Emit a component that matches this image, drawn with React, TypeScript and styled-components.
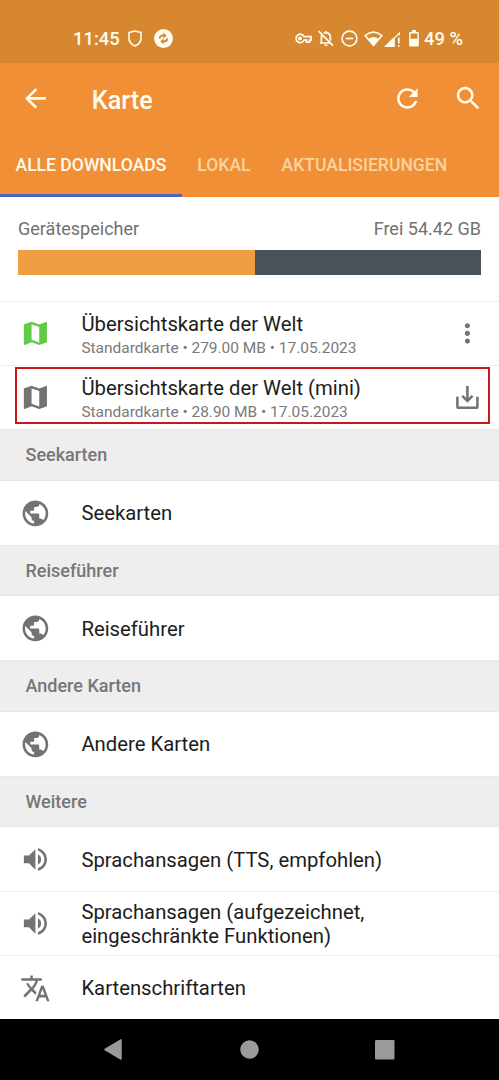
import React from "react";
import styled, { createGlobalStyle } from "styled-components";

const GlobalStyle = createGlobalStyle`
  * { box-sizing: border-box; }
  body { margin: 0; background: #fff; font-family: Roboto, sans-serif; }
`;

const Screen = styled.div`
  width: 499px;
  height: 1080px;
  display: flex;
  flex-direction: column;
  overflow: hidden;
  background: #fff;
`;

const StatusBar = styled.header`
  height: 63px;
  flex: none;
  display: flex;
  align-items: center;
  padding: 14px 36px 0 73px;
  background: #d7872f;
  color: #fffdf2;
  font-size: 18.4px;
  font-weight: 500;
`;

const Clock = styled.span`
  width: 46px;
  white-space: nowrap;
`;

const BatteryLevel = styled.span`
  margin-left: 4.5px;
  white-space: nowrap;
`;

const Glyph = styled.svg<{ $gap?: number }>`
  display: block;
  flex: none;
  margin-left: ${(p) => p.$gap ?? 0}px;
  overflow: visible;
`;

const Spacer = styled.div`
  flex: 1;
`;

const AppBar = styled.div`
  height: 134.3px;
  flex: none;
  background: #f08f35;
  color: #fffdf2;
`;

const Toolbar = styled.div`
  height: 71px;
  display: flex;
  align-items: center;
  padding: 0 15px 0 20px;
`;

const Title = styled.h1`
  margin: 4px 0 0 41px;
  font-size: 25.2px;
  line-height: 30px;
  font-weight: 500;
`;

const Tabs = styled.nav`
  height: 63.3px;
  display: flex;
`;

const Tab = styled.div<{ $active?: boolean }>`
  padding: 19.4px 15.5px 0;
  font-size: 17.56px;
  line-height: 24px;
  font-weight: 500;
  white-space: nowrap;
  color: ${(p) => (p.$active ? "#fffaeb" : "#fbd3a0")};
  border-bottom: 3px solid ${(p) => (p.$active ? "#4a67c6" : "transparent")};
`;

const Storage = styled.section`
  height: 103.7px;
  flex: none;
  padding: 20px 18px 0;
  font-size: 18.03px;
  line-height: 24px;
  color: #717171;
`;

const StorageLabels = styled.div`
  display: flex;
  justify-content: space-between;
`;

const Meter = styled.div`
  display: flex;
  height: 25.5px;
  margin-top: 8.7px;
  background: #495159;
`;

const MeterUsed = styled.div`
  width: 51.1%;
  background: #ee9d43;
`;

const Row = styled.div<{ $first?: boolean }>`
  position: relative;
  height: 64.15px;
  flex: none;
  display: flex;
  align-items: center;
  padding: 0 16.6px 0 20.1px;
  border-top: 1px solid ${(p) => (p.$first ? "transparent" : "#eeeeee")};
  color: #737373;
`;

const RowText = styled.div`
  flex: 1;
  margin-left: 30.5px;
`;

const RowTitle = styled.div`
  font-size: 20.3px;
  line-height: 24px;
  color: #1c1c1c;
  white-space: pre-line;
`;

const RowMeta = styled.div`
  font-size: 15.46px;
  line-height: 20px;
  margin: 2px 0 -3px;
  color: #7a7a7a;
`;

const Highlight = styled.div`
  position: absolute;
  left: 14.5px;
  right: 9px;
  top: 0.6px;
  height: 57px;
  border: 2px solid #cc1518;
`;

const SectionHeader = styled.h2`
  height: 51.35px;
  flex: none;
  margin: 0;
  padding: 0 25.5px;
  background: #eeeeee;
  border-top: 1px solid #e8e8e8;
  border-bottom: 1px solid #e6e6e6;
  font-size: 18px;
  line-height: 50.4px;
  font-weight: 500;
  color: #777777;
`;

const NavBar = styled.footer`
  flex: 1;
  margin-top: -0.5px;
  background: #000;
  display: flex;
  align-items: center;
  padding: 1px 104px 0;
  justify-content: space-between;
`;

const PATHS = {
  back: "M20 11H7.83l5.59-5.59L12 4l-8 8 8 8 1.41-1.41L7.83 13H20v-2z",
  refresh:
    "M17.65 6.35C16.2 4.9 14.21 4 12 4c-4.42 0-7.99 3.58-7.99 8s3.57 8 7.99 8c3.73 0 6.84-2.55 7.73-6h-2.08c-.82 2.33-3.04 4-5.65 4-3.31 0-6-2.69-6-6s2.69-6 6-6c1.66 0 3.14.69 4.22 1.78L13 11h7V4l-2.35 2.35z",
  search:
    "M15.5 14h-.79l-.28-.27C15.41 12.59 16 11.11 16 9.5 16 5.91 13.09 3 9.5 3S3 5.91 3 9.5 5.91 16 9.5 16c1.61 0 3.09-.59 4.23-1.57l.27.28v.79l5 4.99L20.49 19l-4.99-5zm-6 0C7.01 14 5 11.99 5 9.5S7.01 5 9.5 5 14 7.01 14 9.5 11.99 14 9.5 14z",
  map: "M20.5 3l-.16.03L15 5.1 9 3 3.36 4.9c-.21.07-.36.25-.36.48V20.5c0 .28.22.5.5.5l.16-.03L9 18.9l6 2.1 5.64-1.9c.21-.07.36-.25.36-.48V3.5c0-.28-.22-.5-.5-.5zM15 19l-6-2.11V5l6 2.11V19z",
  globe:
    "M12 2C6.48 2 2 6.48 2 12s4.48 10 10 10 10-4.48 10-10S17.52 2 12 2zm-1 17.93c-3.95-.49-7-3.85-7-7.93 0-.62.08-1.21.21-1.79L9 15v1c0 1.1.9 2 2 2v1.93zm6.9-2.54c-.26-.81-1-1.39-1.9-1.39h-1v-3c0-.55-.45-1-1-1H8v-2h2c.55 0 1-.45 1-1V7h2c1.1 0 2-.9 2-2v-.41c2.93 1.19 5 4.06 5 7.41 0 2.08-.8 3.97-2.1 5.39z",
  volume:
    "M3 9v6h4l5 5V4L7 9H3zm13.5 3c0-1.77-1.02-3.29-2.5-4.03v8.05c1.48-.73 2.5-2.25 2.5-4.02zM14 3.23v2.06c2.89.86 5 3.54 5 6.71s-2.11 5.85-5 6.71v2.06c4.01-.91 7-4.49 7-8.77s-2.99-7.86-7-8.77z",
  translate:
    "M12.87 15.07l-2.54-2.51.03-.03c1.74-1.94 2.98-4.17 3.71-6.53H17V4h-7V2H8v2H1v1.99h11.17C11.5 7.92 10.44 9.75 9 11.35 8.07 10.32 7.3 9.19 6.69 8h-2c.73 1.63 1.73 3.17 2.98 4.56l-5.09 5.02L4 19l5-5 3.11 3.11.76-2.04zM18.5 10h-2L12 22h2l1.12-3h4.75L21 22h2l-4.5-12zm-2.62 7l1.62-4.33L19.12 17h-3.24z",
  more: "M12 8c1.1 0 2-.9 2-2s-.9-2-2-2-2 .9-2 2 .9 2 2 2zm0 2c-1.1 0-2 .9-2 2s.9 2 2 2 2-.9 2-2-.9-2-2-2zm0 6c-1.1 0-2 .9-2 2s.9 2 2 2 2-.9 2-2-.9-2-2-2z",
};

function Icon({ name, color = "currentColor", gap }: { name: keyof typeof PATHS; color?: string; gap?: number }) {
  return (
    <Glyph width="30.8" height="30.8" viewBox="0 0 24 24" $gap={gap}>
      <path d={PATHS[name]} fill={color} />
    </Glyph>
  );
}

function DownloadIcon() {
  return (
    <Glyph width="30.8" height="30.8" viewBox="0 0 24 24" fill="none" stroke="#737373" strokeWidth="2">
      <path d="M4.2 11.5v7.5a1 1 0 0 0 1 1h13.6a1 1 0 0 0 1-1v-7.5" />
      <path d="M12 3.2v11.6M8 10.8l4 4 4-4" />
    </Glyph>
  );
}

function StatusIcons() {
  const c = "#fffdf2";
  return (
    <>
      <Glyph width="17" height="11" viewBox="0 0 17 11" fill="none" stroke={c} strokeWidth="1.7">
        <path d="M9.1 3.7A4.2 4.2 0 1 0 9.1 7.1H11.6V9.1H14.7V7.1H16.1V3.7Z" />
        <circle cx="5" cy="5.4" r="1.1" />
      </Glyph>
      <Glyph width="16" height="17" viewBox="0 0 16 17" fill="none" stroke={c} strokeWidth="1.7" $gap={6}>
        <path d="M.6 1.2L15 15.6M3.6 5.5C3.2 7 3.4 9.5 3.4 13H12.5M1.8 13H3.4M5.6 3.4C8 1.8 12.4 3 12.4 7.3V10.7M8 1V3" />
        <path d="M6.3 14.6h3.4a1.7 1.7 0 0 1-3.4 0z" fill={c} stroke="none" />
      </Glyph>
      <Glyph width="17" height="17" viewBox="0 0 17 17" fill="none" stroke={c} strokeWidth="1.7" $gap={7}>
        <circle cx="8.5" cy="8.5" r="7.4" />
        <path d="M4.8 8.5h7.4" />
      </Glyph>
      <Glyph width="19" height="16" viewBox="0 0 19 16" $gap={6}>
        <path d="M1.2 4.5Q9.5-2.3 17.8 4.5L9.5 14.6Z" fill="none" stroke={c} strokeWidth="1.6" />
        <path d="M4.2 8Q9.5 4.2 14.8 8L9.5 15Z" fill={c} />
      </Glyph>
      <Glyph width="17" height="16" viewBox="0 0 17 16" fill={c} $gap={1}>
        <path d="M0 16L9.5 6.5V16Z" />
        <path d="M8.5 8L16 .5V4.6H14.7V3.5L10.8 7.4V16H8.5Z" />
        <path d="M14 6.5h1.6v6H14zM14 14h1.6v1.8H14z" />
      </Glyph>
      <Glyph width="10" height="16.5" viewBox="0 0 10 17" $gap={8}>
        <path d="M3 0h4v2h2a1 1 0 0 1 1 1v13a1 1 0 0 1-1 1H1a1 1 0 0 1-1-1V3a1 1 0 0 1 1-1h2zM1.5 3.5V9h7V3.5z" fill={c} fillRule="evenodd" />
      </Glyph>
    </>
  );
}

function SyncBadge() {
  return (
    <Glyph width="19" height="19" viewBox="0 0 19 19" $gap={12}>
      <circle cx="9.5" cy="9.5" r="9.4" fill="#fffdf2" />
      <g fill="#d7872f">
        <path d="M5 9.6C4.6 6.9 6.3 5.6 9.3 5.6V3.6L12.7 6.7L9.3 9.4V7.5C7.2 7.5 6.4 8.2 6.6 9.9Z" />
        <path d="M14 9.4C14.4 12.1 12.7 13.4 9.7 13.4V15.4L6.3 12.3L9.7 9.6V11.5C11.8 11.5 12.6 10.8 12.4 9.1Z" />
      </g>
    </Glyph>
  );
}

function MapRow({ title, meta, color, highlighted, children }: {
  title: string; meta: string; color: string; highlighted?: boolean; children: React.ReactNode;
}) {
  return (
    <Row>
      <Icon name="map" color={color} />
      <RowText>
        <RowTitle>{title}</RowTitle>
        <RowMeta>{meta}</RowMeta>
      </RowText>
      {children}
      {highlighted && <Highlight />}
    </Row>
  );
}

function EntryRow({ icon, title, first }: { icon: keyof typeof PATHS; title: string; first?: boolean }) {
  return (
    <Row $first={first}>
      <Icon name={icon} />
      <RowText>
        <RowTitle>{title}</RowTitle>
      </RowText>
    </Row>
  );
}

export default function App() {
  return (
    <Screen>
      <GlobalStyle />
      <StatusBar>
        <Clock>11:45</Clock>
        <Glyph width="14" height="17" viewBox="0 0 14 17" $gap={9} fill="none" stroke="#fffdf2" strokeWidth="1.6">
          <path d="M7 1L1 2.6V8.3C1 12 3.5 14.6 7 15.9C10.5 14.6 13 12 13 8.3V2.6Z" strokeLinejoin="round" />
        </Glyph>
        <SyncBadge />
        <Spacer />
        <StatusIcons />
        <BatteryLevel>49 %</BatteryLevel>
      </StatusBar>
      <AppBar>
        <Toolbar>
          <Icon name="back" />
          <Title>Karte</Title>
          <Spacer />
          <Icon name="refresh" />
          <Icon name="search" gap={30} />
        </Toolbar>
        <Tabs>
          <Tab $active>ALLE DOWNLOADS</Tab>
          <Tab>LOKAL</Tab>
          <Tab>AKTUALISIERUNGEN</Tab>
        </Tabs>
      </AppBar>
      <Storage>
        <StorageLabels>
          <span>Gerätespeicher</span>
          <span>Frei 54.42 GB</span>
        </StorageLabels>
        <Meter>
          <MeterUsed />
        </Meter>
      </Storage>
      <MapRow title="Übersichtskarte der Welt" meta="Standardkarte • 279.00 MB • 17.05.2023" color="#62cb46">
        <Icon name="more" />
      </MapRow>
      <MapRow title="Übersichtskarte der Welt (mini)" meta="Standardkarte • 28.90 MB • 17.05.2023" color="#737373" highlighted>
        <DownloadIcon />
      </MapRow>
      <SectionHeader>Seekarten</SectionHeader>
      <EntryRow icon="globe" title="Seekarten" first />
      <SectionHeader>Reiseführer</SectionHeader>
      <EntryRow icon="globe" title="Reiseführer" first />
      <SectionHeader>Andere Karten</SectionHeader>
      <EntryRow icon="globe" title="Andere Karten" first />
      <SectionHeader>Weitere</SectionHeader>
      <EntryRow icon="volume" title="Sprachansagen (TTS, empfohlen)" first />
      <EntryRow icon="volume" title={"Sprachansagen (aufgezeichnet,\neingeschränkte Funktionen)"} />
      <EntryRow icon="translate" title="Kartenschriftarten" />
      <NavBar>
        <Glyph width="18" height="21" viewBox="0 0 18 21">
          <path d="M17 1V20L1 10.5Z" fill="#9a9a9a" stroke="#9a9a9a" strokeWidth="1.5" strokeLinejoin="round" />
        </Glyph>
        <Glyph width="19" height="19" viewBox="0 0 19 19" $gap={2}>
          <circle cx="9.5" cy="9.5" r="9.3" fill="#9a9a9a" />
        </Glyph>
        <Glyph width="20" height="20" viewBox="0 0 20 20">
          <rect width="19.5" height="19.5" rx="1.2" fill="#9a9a9a" />
        </Glyph>
      </NavBar>
    </Screen>
  );
}
